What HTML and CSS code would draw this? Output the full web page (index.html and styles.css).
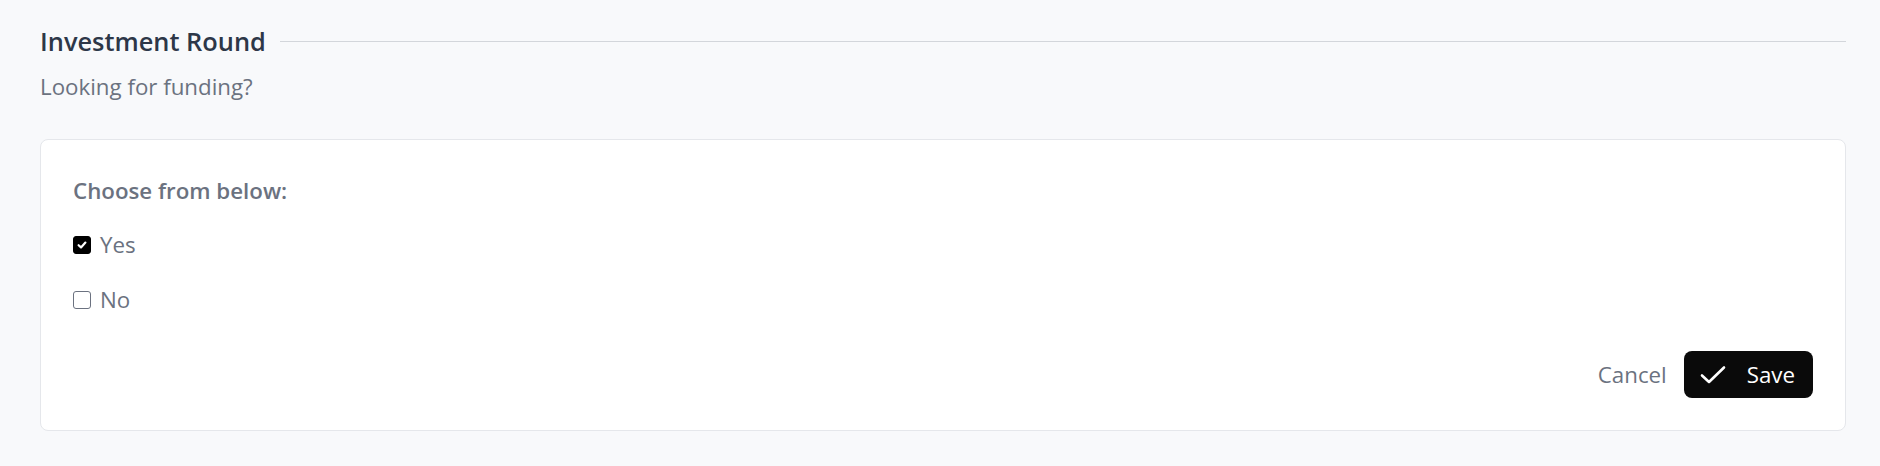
FILE: index.html
```html
<!DOCTYPE html>
<html lang="en">
<head>
<meta charset="utf-8">
<link rel="stylesheet" href="styles.css">
</head>
<body>
<main class="page">
  <div class="section-head">
    <h2 class="section-title">Investment Round</h2>
    <span class="section-rule"></span>
  </div>
  <p class="section-sub">Looking for funding?</p>
  <div class="card">
    <div class="field-label">Choose from below:</div>
    <div class="options">
      <label class="option">
        <span class="box checked">
          <svg viewBox="0 0 12 12" width="12" height="12"><path d="M2.6 6.2 L5 8.4 L9.4 3.6" fill="none" stroke="#fff" stroke-width="2.2" stroke-linecap="round" stroke-linejoin="round"/></svg>
        </span>
        <span class="option-text">Yes</span>
      </label>
      <label class="option">
        <span class="box"></span>
        <span class="option-text">No</span>
      </label>
    </div>
    <div class="actions">
      <button class="btn-cancel" type="button">Cancel</button>
      <button class="btn-save" type="button">
        <svg viewBox="0 0 26 20" width="26" height="20"><path d="M2 10.5 L9 17 L24 2.5" fill="none" stroke="#fff" stroke-width="2.6" stroke-linecap="round" stroke-linejoin="round"/></svg>
        <span>Save</span>
      </button>
    </div>
  </div>
</main>
</body>
</html>
```
FILE: styles.css
```css
html, body {
  margin: 0;
  padding: 0;
  background: #f8f9fb;
}
body {
  font-family: "Open Sans", "Noto Sans", sans-serif;
}
.page {
  padding: 24px 34px 37px 40px;
}
.section-head {
  display: flex;
  align-items: center;
  gap: 14px;
  height: 34px;
}
.section-title {
  margin: 0;
  font-size: 25.4px;
  font-weight: 600;
  color: #2d3748;
  line-height: 34px;
  white-space: nowrap;
}
.section-rule {
  flex: 1;
  height: 1px;
  background: #d3d6db;
}
.section-sub {
  margin: 14px 0 0;
  font-size: 22.3px;
  line-height: 30px;
  color: #6b7280;
}
.card {
  margin-top: 37px;
  background: #fff;
  border: 1px solid #e5e7eb;
  border-radius: 8px;
  padding: 36px 32px 32px;
  display: flex;
  flex-direction: column;
}
.field-label {
  font-size: 22.3px;
  font-weight: 600;
  line-height: 30px;
  color: #6b7280;
}
.options {
  display: flex;
  flex-direction: column;
  gap: 25px;
  margin-top: 24px;
}
.option {
  display: flex;
  align-items: center;
  gap: 9px;
  height: 30px;
}
.box {
  box-sizing: border-box;
  width: 18px;
  height: 18px;
  border: 1.5px solid #6b7280;
  border-radius: 3px;
  display: flex;
  align-items: center;
  justify-content: center;
  background: #fff;
}
.box.checked {
  background: #000;
  border-color: #000;
}
.option-text {
  font-size: 22.3px;
  color: #6b7280;
  line-height: 30px;
}
.actions {
  display: flex;
  justify-content: flex-end;
  align-items: center;
  gap: 17px;
  margin-top: 36px;
}
.btn-cancel {
  background: none;
  border: none;
  padding: 0;
  font-family: inherit;
  font-size: 22.3px;
  color: #6b7280;
  line-height: 30px;
}
.btn-save {
  display: flex;
  align-items: center;
  gap: 21px;
  height: 47px;
  padding: 0 18px 0 16px;
  background: #0a0a0a;
  border: none;
  border-radius: 8px;
  color: #fff;
  font-family: inherit;
  font-size: 22.3px;
}
```
